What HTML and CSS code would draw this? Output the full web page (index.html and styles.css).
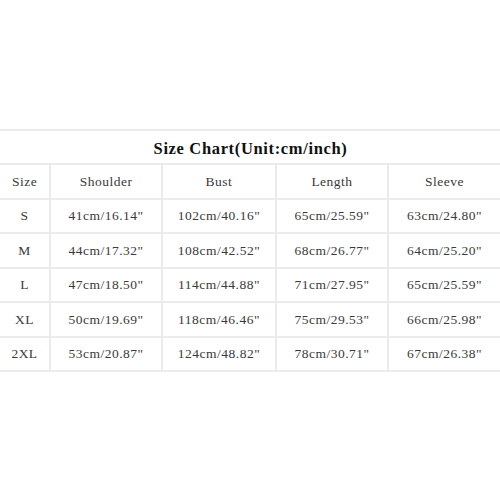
FILE: index.html
```html
<!DOCTYPE html>
<html>
<head>
<meta charset="utf-8">
<link rel="stylesheet" href="styles.css">
</head>
<body>
<div class="chart">
  <div class="title">Size Chart(Unit:cm/inch)</div>
  <div class="grid">
    <div class="cell">Size</div><div class="cell">Shoulder</div><div class="cell">Bust</div><div class="cell">Length</div><div class="cell">Sleeve</div>
    <div class="cell">S</div><div class="cell">41cm/16.14"</div><div class="cell">102cm/40.16"</div><div class="cell">65cm/25.59"</div><div class="cell">63cm/24.80"</div>
    <div class="cell">M</div><div class="cell">44cm/17.32"</div><div class="cell">108cm/42.52"</div><div class="cell">68cm/26.77"</div><div class="cell">64cm/25.20"</div>
    <div class="cell">L</div><div class="cell">47cm/18.50"</div><div class="cell">114cm/44.88"</div><div class="cell">71cm/27.95"</div><div class="cell">65cm/25.59"</div>
    <div class="cell">XL</div><div class="cell">50cm/19.69"</div><div class="cell">118cm/46.46"</div><div class="cell">75cm/29.53"</div><div class="cell">66cm/25.98"</div>
    <div class="cell">2XL</div><div class="cell">53cm/20.87"</div><div class="cell">124cm/48.82"</div><div class="cell">78cm/30.71"</div><div class="cell">67cm/26.38"</div>
  </div>
</div>
</body>
</html>
```
FILE: styles.css
```css
html, body {
  margin: 0;
  padding: 0;
  background: #fff;
  width: 500px;
  height: 500px;
  overflow: hidden;
}
.chart {
  margin-top: 129px;
  border-top: 2px solid #ebebeb;
  font-family: "Liberation Serif", "DejaVu Serif", serif;
  color: #3a3a3a;
}
.title {
  height: 34px;
  box-sizing: border-box;
  border-bottom: 2px solid #ebebeb;
  display: flex;
  align-items: center;
  justify-content: center;
  font-size: 16.5px;
  font-weight: bold;
  letter-spacing: 0.65px;
  color: #111;
  padding-left: 1px;
  padding-top: 3px;
}
.grid {
  display: grid;
  grid-template-columns: 49px 112px 114px 112px 113px;
  grid-auto-rows: 34.5px;
}
.cell {
  box-sizing: border-box;
  border-bottom: 2px solid #ebebeb;
  display: flex;
  align-items: center;
  justify-content: center;
  font-size: 13.5px;
  letter-spacing: 0.5px;
  padding-top: 1px;
}
.cell:not(:nth-child(5n+1)) {
  border-left: 2px solid #ebebeb;
}
```
